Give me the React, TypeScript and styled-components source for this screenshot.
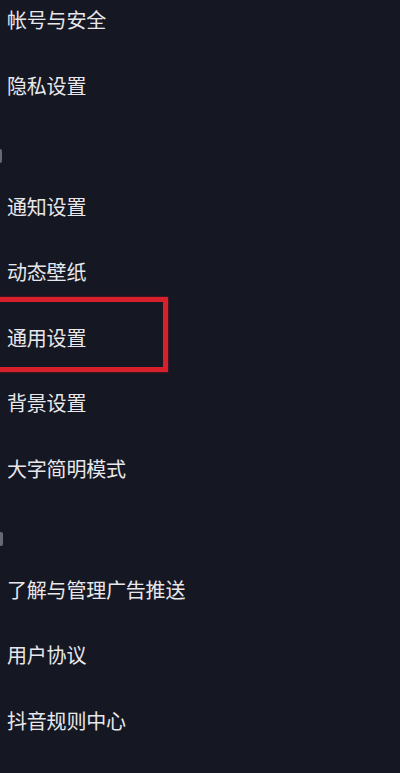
import React from "react";
import styled, { createGlobalStyle } from "styled-components";

const GlobalStyle = createGlobalStyle`
  html, body {
    margin: 0;
    padding: 0;
    background: #151722;
  }
  body {
    font-family: "Noto Sans CJK SC", "Noto Sans", sans-serif;
    overflow: hidden;
  }
`;

const Page = styled.div`
  width: 400px;
  height: 773px;
  overflow: hidden;
  background: #151722;
`;

const List = styled.div`
  display: flex;
  flex-direction: column;
  margin-top: -13px;
`;

const Row = styled.div`
  position: relative;
  height: 65.5px;
  display: flex;
  align-items: center;
  padding-left: 7px;
  color: #e8e8ec;
  font-size: 20px;
  letter-spacing: -0.2px;
`;

const SectionHeader = styled.div<{ $mark: number }>`
  height: 55.5px;
  display: flex;
  align-items: flex-end;
  padding-bottom: 11px;
  box-sizing: border-box;
  &::before {
    content: "";
    display: block;
    width: ${(p) => p.$mark}px;
    height: 14px;
    border-radius: 0 2px 2px 0;
    background: #7c7e88;
    opacity: 0.8;
  }
`;

const Highlight = styled.div`
  position: absolute;
  top: -8px;
  left: -20px;
  width: 188px;
  height: 75px;
  box-sizing: border-box;
  border: 5px solid #d8202d;
  box-shadow: 0 0 2px rgba(216, 32, 45, 0.6);
  pointer-events: none;
`;

type Section = { mark?: number; items: { label: string; marked?: boolean }[] };

const sections: Section[] = [
  { items: [{ label: "帐号与安全" }, { label: "隐私设置" }] },
  {
    mark: 2,
    items: [
      { label: "通知设置" },
      { label: "动态壁纸" },
      { label: "通用设置", marked: true },
      { label: "背景设置" },
      { label: "大字简明模式" },
    ],
  },
  {
    mark: 3,
    items: [
      { label: "了解与管理广告推送" },
      { label: "用户协议" },
      { label: "抖音规则中心" },
    ],
  },
];

export default function App() {
  return (
    <Page>
      <GlobalStyle />
      <List>
        {sections.map((s, i) => (
          <React.Fragment key={i}>
            {s.mark !== undefined && <SectionHeader $mark={s.mark} />}
            {s.items.map((it) => (
              <Row key={it.label}>
                {it.label}
                {it.marked && <Highlight />}
              </Row>
            ))}
          </React.Fragment>
        ))}
      </List>
    </Page>
  );
}
